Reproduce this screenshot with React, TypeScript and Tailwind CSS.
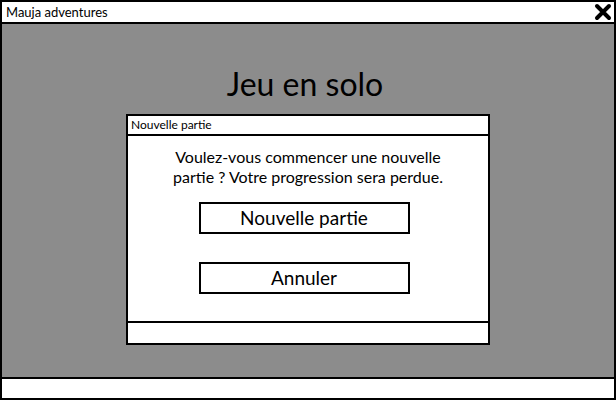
import React from 'react';

const font = { fontFamily: 'Lato, "Open Sans", sans-serif' };

const App = () => {
    return (
        <div className="w-[616px] h-[400px] flex flex-col border-2 border-black bg-white text-black" style={font}>
            {/* barre de titre */}
            <div className="h-[22px] shrink-0 flex items-center justify-between border-b-2 border-black pl-[4px] pr-[2px]">
                <span className="text-[13px] leading-none">Mauja adventures</span>
                <svg width="18" height="18" viewBox="0 0 18 18">
                    <path d="M3 3 L15 15 M15 3 L3 15" stroke="black" strokeWidth="4" strokeLinecap="round" />
                </svg>
            </div>

            {/* zone principale */}
            <div className="flex-1 bg-[#8c8c8c] flex flex-col items-center pt-[40px]">
                <h1 className="text-[32px] leading-[40px] mr-[6px]">Jeu en solo</h1>

                <div className="mt-[10px] w-[364px] h-[231px] bg-white border-2 border-black flex flex-col">
                    <div className="h-[20px] shrink-0 border-b-2 border-black flex items-center pl-[3px]">
                        <span className="text-[12px] leading-none">Nouvelle partie</span>
                    </div>
                    <div className="flex-1 flex flex-col items-center pt-[11px]">
                        <p className="text-[16px] leading-[20px] text-center w-[300px]">
                            Voulez-vous commencer une nouvelle partie ? Votre progression sera perdue.
                        </p>
                        <button className="mt-[15px] mr-[8px] w-[211px] h-[32px] border-2 border-black text-[19px]">
                            Nouvelle partie
                        </button>
                        <button className="mt-[28px] mr-[8px] w-[211px] h-[32px] border-2 border-black text-[19px]">
                            Annuler
                        </button>
                    </div>
                    <div className="h-[22px] shrink-0 border-t-2 border-black" />
                </div>
            </div>

            {/* barre d'état */}
            <div className="h-[21px] shrink-0 border-t-2 border-black bg-white" />
        </div>
    );
};

export default App;
